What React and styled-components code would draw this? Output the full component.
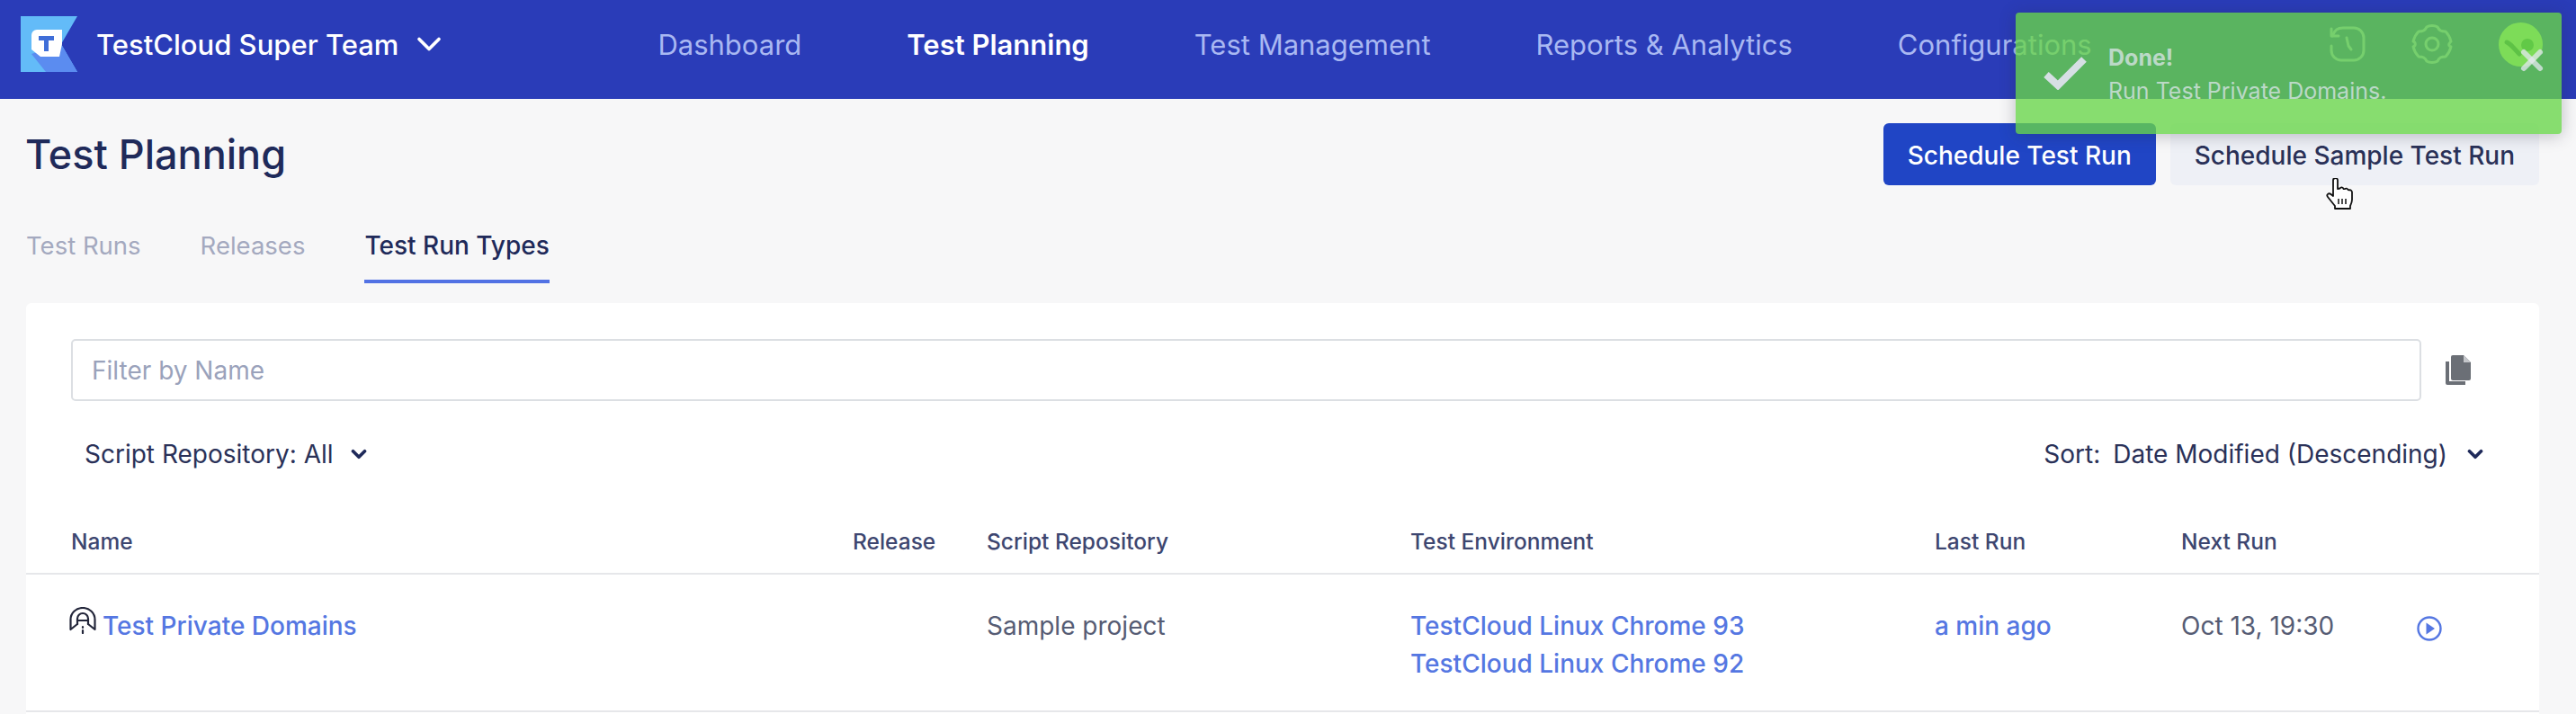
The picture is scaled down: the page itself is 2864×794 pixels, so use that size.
import styled, { createGlobalStyle } from "styled-components";
import { ChevronDown, X } from "lucide-react";

const GlobalStyle = createGlobalStyle`
  html, body {
    margin: 0;
    padding: 0;
    background: #f7f7f8;
    font-family: Inter, "Liberation Sans", sans-serif;
  }
  * {
    box-sizing: border-box;
  }
`;

const Page = styled.div`
  position: relative;
  width: 2864px;
  height: 794px;
  overflow: hidden;
`;

const Header = styled.header`
  display: flex;
  align-items: center;
  height: 110px;
  padding: 0 0 12px 23px;
  background: #2a3cb8;
`;

const TeamName = styled.span`
  margin-left: 21px;
  font-size: 31px;
  font-weight: 500;
  color: #fff;
`;

const TeamChevron = styled(ChevronDown)`
  margin-left: 12px;
  color: #fff;
`;

const Nav = styled.nav`
  display: flex;
  gap: 117px;
  margin-left: 232px;
`;

const NavItem = styled.a`
  font-size: 31px;
  font-weight: ${(p) => (p.$active ? 600 : 400)};
  color: ${(p) => (p.$active ? "#fff" : "#a9b8f2")};
`;

const HeaderIcons = styled.div`
  display: flex;
  align-items: center;
  gap: 51px;
  margin-left: auto;
  margin-right: 37px;
`;

const Main = styled.main`
  padding: 27px 41px 0 29px;
`;

const TitleRow = styled.div`
  display: flex;
  align-items: center;
  height: 69px;
`;

const Title = styled.h1`
  margin: 0 0 0 -1px;
  font-size: 45px;
  font-weight: 500;
  color: #1f2a5a;
`;

const Actions = styled.div`
  display: flex;
  gap: 16px;
  margin-left: auto;
`;

const Button = styled.button`
  height: 69px;
  padding: 2px 27px 0;
  border: none;
  border-radius: 6px;
  font-family: inherit;
  font-size: 28px;
  font-weight: 500;
  background: ${(p) => (p.$primary ? "#2045c5" : "#eef0f6")};
  color: ${(p) => (p.$primary ? "#fff" : "#2a3158")};
`;

const Tabs = styled.div`
  display: flex;
  gap: 66px;
  margin-top: 30px;
`;

const Tab = styled.a`
  height: 79px;
  padding-top: 20px;
  border-bottom: 4px solid ${(p) => (p.$active ? "#5272e4" : "transparent")};
  font-size: ${(p) => (p.$active ? 28 : 27.5)}px;
  font-weight: ${(p) => (p.$active ? 500 : 400)};
  color: ${(p) => (p.$active ? "#1f2a5a" : "#a4a9bf")};
`;

const Card = styled.section`
  margin-top: 22px;
  padding-top: 40px;
  height: 460px;
  background: #fff;
  border-radius: 6px 6px 0 0;
`;

const FilterRow = styled.div`
  display: flex;
  align-items: center;
  padding-left: 50px;
`;

const FilterInput = styled.div`
  display: flex;
  align-items: center;
  width: 2613px;
  height: 69px;
  padding-left: 21px;
  border: 2px solid #dcdfe3;
  border-radius: 5px;
  font-size: 28px;
  color: #9aa2bb;
`;

const CopyIcon = styled.svg`
  margin-left: 27px;
`;

const Filters = styled.div`
  display: flex;
  align-items: center;
  justify-content: space-between;
  height: 36px;
  margin-top: 41px;
  padding: 0 58px 0 65px;
`;

const FilterLabel = styled.div`
  display: flex;
  align-items: center;
  font-size: 28px;
  color: #2a3158;
`;

const SmallChevron = styled(ChevronDown)`
  margin-left: ${(p) => p.$gap}px;
  color: #1f2a5a;
`;

const SortValue = styled.span`
  margin-left: 14px;
`;

const columns = "869px 149px 471px 583px 274px 262px 1fr";

const TableHead = styled.div`
  display: grid;
  grid-template-columns: ${columns};
  align-items: center;
  height: 116px;
  padding: 44px 0 0 50px;
  border-bottom: 2px solid #e6e7ea;
  font-size: 24.5px;
  font-weight: 500;
  color: #3d4670;
`;

const TableRow = styled.div`
  display: grid;
  grid-template-columns: ${columns};
  height: 153px;
  padding: 36px 0 0 50px;
  border-bottom: 2px solid #e6e7ea;
  font-size: 28px;
  line-height: 42px;
  color: #565c74;
`;

const NameCell = styled.div`
  display: flex;
  align-items: flex-start;
  gap: 7px;
  margin-left: -2px;
`;

const RowLink = styled.a`
  display: block;
  font-weight: 500;
  color: #5577e2;
`;

const PlayCell = styled.div`
  padding-top: 7px;
`;

const Toast = styled.div`
  position: absolute;
  left: 2241px;
  top: 14px;
  display: flex;
  width: 607px;
  height: 135px;
  padding: 36px 0 0 30px;
  border-radius: 4px;
  background: rgba(104, 214, 72, 0.78);
  box-shadow: 0 2px 18px rgba(40, 40, 60, 0.28);
`;

const CheckMark = styled.svg`
  margin-top: 12px;
`;

const ToastBody = styled.div`
  margin-left: 23px;
  color: rgba(226, 232, 240, 0.72);
`;

const ToastTitle = styled.div`
  font-size: 25px;
  font-weight: 700;
  line-height: 28px;
`;

const ToastText = styled.div`
  margin-top: 9px;
  font-size: 25px;
  line-height: 28px;
`;

const ToastClose = styled(X)`
  position: absolute;
  top: 35px;
  right: 15px;
  color: rgba(228, 232, 240, 0.75);
`;

const Cursor = styled.svg`
  position: absolute;
  left: 2586px;
  top: 198px;
`;

const Logo = () => (
  <svg width="63" height="62" viewBox="0 0 63 62">
    <path d="M0 0H63L45 31L63 62H28L0 62Z" fill="#63bbf8" />
    <path d="M12 42L28 62H63L45 31Z" fill="#5b8cf0" />
    <path d="M18 15H46V31L43 45H22L12 37V21a6 6 0 0 1 6-6Z" fill="#fff" />
    <path d="M20 22H37V27H31V39H26V27H20Z" fill="#3f6ed8" />
  </svg>
);

const HistoryIcon = () => (
  <svg width="40" height="40" viewBox="0 0 40 40" fill="none" stroke="#a9b8f2" strokeWidth="3" strokeLinecap="round" strokeLinejoin="round">
    <path d="M3 11C6 4 9 2 15 2H27a11 11 0 0 1 11 11V27a11 11 0 0 1-11 11H13A11 11 0 0 1 2 27V22" />
    <path d="M2 3V11H10" />
    <path d="M19 13L21 22L24 26" />
  </svg>
);

const GearIcon = () => (
  <svg width="46" height="44" viewBox="0 0 46 44" fill="none" stroke="#a9b8f2" strokeWidth="3" strokeLinejoin="round">
    <path d="M17 3C20 1 26 1 29 3C31 7 33 8 38 8C41 11 43 15 44 19C41 22 41 24 44 25C43 29 41 33 38 36C33 36 31 37 29 41C26 43 20 43 17 41C15 37 13 36 8 36C5 33 3 29 2 25C5 24 5 20 2 19C3 15 5 11 8 8C13 8 15 7 17 3Z" />
    <circle cx="23" cy="22" r="7" />
  </svg>
);

const Avatar = () => (
  <svg width="49" height="49" viewBox="0 0 49 49">
    <circle cx="24.5" cy="24.5" r="24.5" fill="#c8f090" />
    <circle cx="32" cy="25" r="7" fill="#4a9a44" />
    <path d="M9 22C13 23 18 30 23 35" fill="none" stroke="#3c7a40" strokeWidth="5" strokeLinecap="round" />
  </svg>
);

const TunnelIcon = () => (
  <svg width="30" height="30" viewBox="0 0 30 30" fill="none" stroke="#23263a" strokeWidth="2.2" strokeLinejoin="round" strokeLinecap="round">
    <path d="M9 19L1.5 25V14a13.5 13 0 0 1 27 0V25L21 19" />
    <path d="M9 19V13a6 6 0 0 1 12 0V19" />
    <path d="M9 15H21" />
    <path d="M15 22V23M15 26V29" />
  </svg>
);

const PlayIcon = () => (
  <svg width="28" height="28" viewBox="0 0 28 28" fill="none">
    <circle cx="14" cy="14" r="12.5" stroke="#5577e2" strokeWidth="2.4" />
    <path d="M10.5 7.5L20 14L10.5 20.5Z" fill="#5577e2" />
  </svg>
);

const App = () => (
  <Page>
    <GlobalStyle />
    <Header>
      <Logo />
      <TeamName>TestCloud Super Team</TeamName>
      <TeamChevron size={44} strokeWidth={2} />
      <Nav>
        <NavItem>Dashboard</NavItem>
        <NavItem $active>Test Planning</NavItem>
        <NavItem>Test Management</NavItem>
        <NavItem>Reports &amp; Analytics</NavItem>
        <NavItem>Configurations</NavItem>
      </Nav>
      <HeaderIcons>
        <HistoryIcon />
        <GearIcon />
        <Avatar />
      </HeaderIcons>
    </Header>
    <Main>
      <TitleRow>
        <Title>Test Planning</Title>
        <Actions>
          <Button $primary>Schedule Test Run</Button>
          <Button>Schedule Sample Test Run</Button>
        </Actions>
      </TitleRow>
      <Tabs>
        <Tab>Test Runs</Tab>
        <Tab>Releases</Tab>
        <Tab $active>Test Run Types</Tab>
      </Tabs>
      <Card>
        <FilterRow>
          <FilterInput>Filter by Name</FilterInput>
          <CopyIcon width="28" height="33" viewBox="0 0 28 33">
            <path d="M8 0H20L28 8V26a2 2 0 0 1-2 2H8a2 2 0 0 1-2-2V2a2 2 0 0 1 2-2Z" fill="#6b6f76" />
            <path d="M20 0L28 8H20Z" fill="#c4c6ca" />
            <path d="M0 7H4V29H22V33H2a2 2 0 0 1-2-2Z" fill="#6b6f76" />
          </CopyIcon>
        </FilterRow>
        <Filters>
          <FilterLabel>
            Script Repository: All
            <SmallChevron size={26} strokeWidth={3.4} $gap={15} />
          </FilterLabel>
          <FilterLabel>
            Sort:
            <SortValue>Date Modified (Descending)</SortValue>
            <SmallChevron size={26} strokeWidth={3.4} $gap={18} />
          </FilterLabel>
        </Filters>
        <TableHead>
          <div>Name</div>
          <div>Release</div>
          <div>Script Repository</div>
          <div>Test Environment</div>
          <div>Last Run</div>
          <div>Next Run</div>
        </TableHead>
        <TableRow>
          <NameCell>
            <TunnelIcon />
            <RowLink>Test Private Domains</RowLink>
          </NameCell>
          <div />
          <div>Sample project</div>
          <div>
            <RowLink>TestCloud Linux Chrome 93</RowLink>
            <RowLink>TestCloud Linux Chrome 92</RowLink>
          </div>
          <RowLink>a min ago</RowLink>
          <div>Oct 13, 19:30</div>
          <PlayCell>
            <PlayIcon />
          </PlayCell>
        </TableRow>
      </Card>
    </Main>
    <Toast>
      <CheckMark width="50" height="38" viewBox="0 0 50 38" fill="none">
        <path d="M4 21L17 33L46 4" stroke="#d6dfe4" strokeWidth="8" />
      </CheckMark>
      <ToastBody>
        <ToastTitle>Done!</ToastTitle>
        <ToastText>Run Test Private Domains.</ToastText>
      </ToastBody>
      <ToastClose size={36} strokeWidth={4} />
    </Toast>
    <Cursor width="30" height="35" viewBox="0 0 30 35">
      <path
        d="M8 2.5a2.5 2.5 0 0 1 5 0V12l2.5-.5a2.2 2.2 0 0 1 4 .5l1.5.2a2.2 2.2 0 0 1 3.5.8l1.5.3a2.5 2.5 0 0 1 3 2.5V24c0 3-1 5-2 7v3H10v-3L2 21c-2-2.5 1-5 3.5-3L8 20Z"
        fill="#fff"
        stroke="#111"
        strokeWidth="1.8"
        strokeLinejoin="round"
      />
      <path d="M14 23V29M18 23V29M22 23V29" stroke="#111" strokeWidth="1.5" />
    </Cursor>
  </Page>
);

export default App;
